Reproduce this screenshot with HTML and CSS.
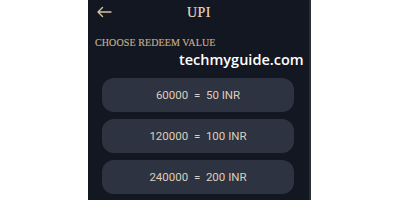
FILE: index.html
```html
<!DOCTYPE html>
<html>
<head>
<meta charset="utf-8">
<link rel="stylesheet" href="styles.css">
</head>
<body>
<div class="panel">
  <div class="header">
    <svg class="back" width="16" height="12" viewBox="0 0 16 12"><path d="M15 6H2M6.5 1.5L2 6l4.5 4.5" fill="none" stroke="#d8c3a0" stroke-width="1.4" stroke-linecap="round" stroke-linejoin="round"/></svg>
    <div class="title">UPI</div>
  </div>
  <div class="label">CHOOSE REDEEM VALUE</div>
  <div class="watermark">techmyguide.com</div>
  <div class="options">
    <div class="opt">60000 &nbsp;= &nbsp;50 INR</div>
    <div class="opt">120000 &nbsp;= &nbsp;100 INR</div>
    <div class="opt">240000 &nbsp;= &nbsp;200 INR</div>
  </div>
</div>
</body>
</html>
```
FILE: styles.css
```css
html, body { margin: 0; padding: 0; background: #ffffff; }
body { width: 400px; height: 200px; overflow: hidden; }
.panel {
  position: relative;
  margin-left: 88px;
  width: 221px;
  height: 200px;
  background: #131722;
  border-right: 2px solid #2a2e38;
  box-sizing: content-box;
}
.header {
  position: relative;
  height: 25px;
  display: flex;
  align-items: center;
  justify-content: center;
}
.back { position: absolute; left: 8px; top: 6px; }
.title {
  font-family: "Liberation Serif", serif;
  font-size: 14px;
  color: #e6d7bd;
  letter-spacing: 0.4px;
  margin-left: 1px;
  -webkit-text-stroke: 0.2px #e6d7bd;
}
.label {
  margin: 12px 0 0 7px;
  font-family: "Liberation Serif", serif;
  font-size: 10px;
  color: #c9b08a;
  letter-spacing: 0.1px;
  -webkit-text-stroke: 0.15px #c9b08a;
}
.watermark {
  position: absolute;
  left: 91px;
  top: 50px;
  font-family: "Open Sans", sans-serif;
  font-weight: 600;
  font-size: 14.5px;
  color: #ffffff;
}
.options {
  display: flex;
  flex-direction: column;
  gap: 7px;
  padding: 0 15px 0 14px;
  margin-top: 30px;
}
.opt {
  height: 34px;
  border-radius: 12px;
  background: #2d3341;
  display: flex;
  align-items: center;
  justify-content: center;
  font-family: Roboto, sans-serif;
  font-size: 11.5px;
  color: #dccfbb;
}
```
